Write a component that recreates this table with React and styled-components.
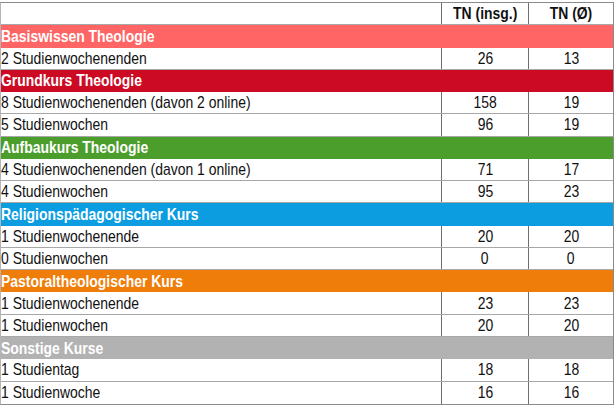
import React from 'react';
import styled, { createGlobalStyle } from 'styled-components';

const GlobalStyle = createGlobalStyle`
  html, body {
    margin: 0;
    padding: 0;
    background: #ffffff;
  }
  body {
    font-family: "Liberation Sans", Arial, sans-serif;
    color: #111;
  }
`;

const groups = [
  {
    title: 'Basiswissen Theologie',
    color: '#ff6565',
    rows: [['2 Studienwochenenden', 26, 13]],
  },
  {
    title: 'Grundkurs Theologie',
    color: '#cc0a24',
    rows: [
      ['8 Studienwochenenden (davon 2 online)', 158, 19],
      ['5 Studienwochen', 96, 19],
    ],
  },
  {
    title: 'Aufbaukurs Theologie',
    color: '#4c9e2c',
    rows: [
      ['4 Studienwochenenden (davon 1 online)', 71, 17],
      ['4 Studienwochen', 95, 23],
    ],
  },
  {
    title: 'Religionspädagogischer Kurs',
    color: '#0c9de0',
    rows: [
      ['1 Studienwochenende', 20, 20],
      ['0 Studienwochen', 0, 0],
    ],
  },
  {
    title: 'Pastoraltheologischer Kurs',
    color: '#ee7d0a',
    rows: [
      ['1 Studienwochenende', 23, 23],
      ['1 Studienwochen', 20, 20],
    ],
  },
  {
    title: 'Sonstige Kurse',
    color: '#b2b2b2',
    rows: [
      ['1 Studientag', 18, 18],
      ['1 Studienwoche', 16, 16],
    ],
  },
];

export default function App() {
  return (
    <>
      <GlobalStyle />
      <Page>
        <Table>
          <Row>
            <Cell />
            <NumCell $bold>
              <Narrow $center>TN (insg.)</Narrow>
            </NumCell>
            <NumCell $bold>
              <Narrow $center>TN (Ø)</Narrow>
            </NumCell>
          </Row>
          {groups.map((g) => (
            <React.Fragment key={g.title}>
              <GroupRow $color={g.color}>
                <Narrow>{g.title}</Narrow>
              </GroupRow>
              {g.rows.map(([label, total, avg], i) => (
                <Row key={i}>
                  <Cell>
                    <Narrow>{label}</Narrow>
                  </Cell>
                  <NumCell>
                    <Narrow $center>{total}</Narrow>
                  </NumCell>
                  <NumCell>
                    <Narrow $center>{avg}</Narrow>
                  </NumCell>
                </Row>
              ))}
            </React.Fragment>
          ))}
        </Table>
      </Page>
    </>
  );
}

const Page = styled.div`
  padding-top: 2px;
`;

const Table = styled.div`
  width: 614px;
  box-sizing: border-box;
  border: 1px solid #8a8a8a;
  border-left-color: #b5b5b5;
  display: flex;
  flex-direction: column;
`;

const Row = styled.div`
  display: grid;
  grid-template-columns: 440px 87px 1fr;
  height: calc(401px / 18);
  box-sizing: border-box;
  border-bottom: 1px solid #a8a8a8;
  &:last-child {
    border-bottom: none;
  }
`;

/* the reference uses a condensed face (Arial Narrow); no narrow font is installed,
   so the regular face is squeezed horizontally */
const Narrow = styled.span`
  display: inline-block;
  transform: scaleX(0.82);
  transform-origin: ${(p) => (p.$center ? 'center' : 'left')} center;
  white-space: nowrap;
`;

const Cell = styled.div`
  display: flex;
  align-items: center;
  font-size: 17px;
  line-height: 1;
  white-space: nowrap;
  overflow: hidden;
`;

const NumCell = styled(Cell)`
  justify-content: center;
  border-left: 1px solid #6e6e6e;
  font-weight: ${(p) => (p.$bold ? 700 : 400)};
`;

const GroupRow = styled.div`
  display: flex;
  align-items: center;
  height: calc(401px / 18);
  box-sizing: border-box;
  background: ${(p) => p.$color};
  color: #ffffff;
  font-size: 17px;
  font-weight: 700;
  line-height: 1;
  white-space: nowrap;
`;
